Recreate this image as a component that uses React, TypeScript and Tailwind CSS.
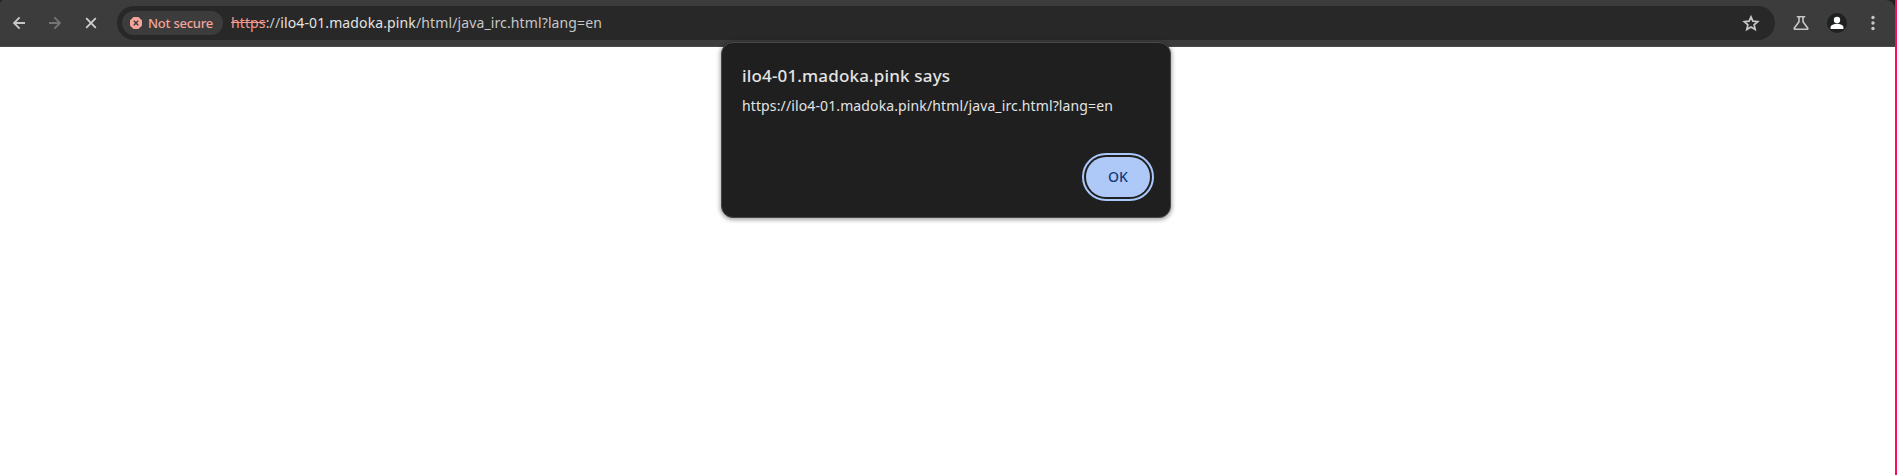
import type { ReactNode } from "react";

function Icon({ children, className = "" }: { children: ReactNode; className?: string }) {
  return (
    <svg viewBox="0 0 20 20" className={`block size-5 shrink-0 ${className}`} fill="none" stroke="currentColor" strokeWidth="1.8">
      {children}
    </svg>
  );
}

function Toolbar() {
  return (
    <header className="flex h-[47px] items-center rounded-tl-[4px] rounded-tr-[9px] border-b border-[#4b4b4b] bg-[#3c3c3c] text-[#c7c7c7]">
      <div className="ml-[9px] flex w-[108px] shrink-0 gap-4">
        <Icon><path d="M16 10H5.3M10.6 4.4 5 10l5.6 5.6" /></Icon>
        <Icon className="text-[#757575]"><path d="M4 10h10.7M9.4 4.4 15 10l-5.6 5.6" /></Icon>
        <Icon className="text-[#d0d0d0]"><path d="m5.2 5.2 9.6 9.6M14.8 5.2l-9.6 9.6" /></Icon>
      </div>
      <div className="flex h-[34px] w-[1658px] shrink-0 items-center rounded-full bg-[#282828] pl-[5px]">
        <div className="flex h-6 w-[101px] shrink-0 items-center rounded-full bg-[#3c3c3c] pl-2 text-[#f5a39b]">
          <svg viewBox="0 0 12 12" className="size-3 shrink-0">
            <path d="M3.6 0h4.8L12 3.6v4.8L8.4 12H3.6L0 8.4V3.6z" fill="currentColor" stroke="currentColor" strokeLinejoin="round" strokeWidth=".2" />
            <path d="m3.8 3.8 4.4 4.4M8.2 3.8 3.8 8.2" stroke="#3c3c3c" strokeWidth="1.5" />
          </svg>
          <span className="ml-[6px] text-[13px] leading-5 font-medium tracking-[-0.25px] whitespace-nowrap">Not secure</span>
        </div>
        <div className="ml-2 text-[14px] leading-5 tracking-[0.12px] whitespace-nowrap text-[#c7c7c7]">
          <span className="text-[#f5998f] line-through">https</span>://<span className="text-[#e3e3e3]">ilo4-01.madoka.pink</span>/html/java_irc.html?lang=en
        </div>
        <Icon className="mr-[14px] ml-auto">
          <path d="m10 3.8 1.9 4.4 4.8.4-3.6 3.2 1.1 4.7-4.2-2.5-4.2 2.5 1.1-4.7-3.6-3.2 4.8-.4z" strokeWidth="1.7" />
        </Icon>
      </div>
      <Icon className="ml-4"><path d="M5.8 3.8h8.4M8 4v4.8l-4.6 6.1q-.7 1.4.9 1.4h11.4q1.6 0 .9-1.4L12 8.8V4" strokeWidth="1.6" /></Icon>
      <svg viewBox="0 0 20 20" className="ml-4 size-5 shrink-0">
        <circle cx="10" cy="10" r="10" fill="#1e2021" />
        <circle cx="10" cy="7" r="3.2" fill="#fff" />
        <path d="M3.6 16v-1.8c0-2.2 4-3.4 6.4-3.4s6.4 1.2 6.4 3.4V16z" fill="#fff" />
      </svg>
      <svg viewBox="0 0 20 20" className="ml-4 size-5 shrink-0" fill="currentColor">
        <circle cx="10" cy="4.5" r="1.7" />
        <circle cx="10" cy="10" r="1.7" />
        <circle cx="10" cy="15.5" r="1.7" />
      </svg>
    </header>
  );
}

function AlertDialog() {
  return (
    <div role="alertdialog" className="absolute top-[42px] left-[721px] flex h-[176px] w-[450px] flex-col rounded-[12px] border border-[#484848] bg-[#1f1f1f] px-5 pt-[21px] pb-5 shadow-[0_1px_4px_1px_rgba(0,0,0,0.35)]">
      <h1 className="text-[17px] leading-6 font-medium tracking-[0.16px] whitespace-nowrap text-[#e3e3e3]">ilo4-01.madoka.pink says</h1>
      <p className="mt-2 text-[14px] leading-5 tracking-[0.12px] whitespace-nowrap text-[#e3e3e3]">https://ilo4-01.madoka.pink/html/java_irc.html?lang=en</p>
      <button className="mt-auto h-10 w-16 self-end rounded-full bg-[#aec8f8] text-[14px] leading-5 font-medium text-[#143a78] outline-2 outline-offset-2 outline-[#a8c7fa]">OK</button>
    </div>
  );
}

export default function App() {
  return (
    <div className="relative h-[475px] w-[1897px] overflow-hidden bg-white font-['Noto_Sans',sans-serif]">
      <div className="flex h-full border-r-2 border-[#ff0a5e]">
        <div className="flex-1">
          <div className="bg-[#202020]">
            <Toolbar />
          </div>
        </div>
      </div>
      <AlertDialog />
    </div>
  );
}
